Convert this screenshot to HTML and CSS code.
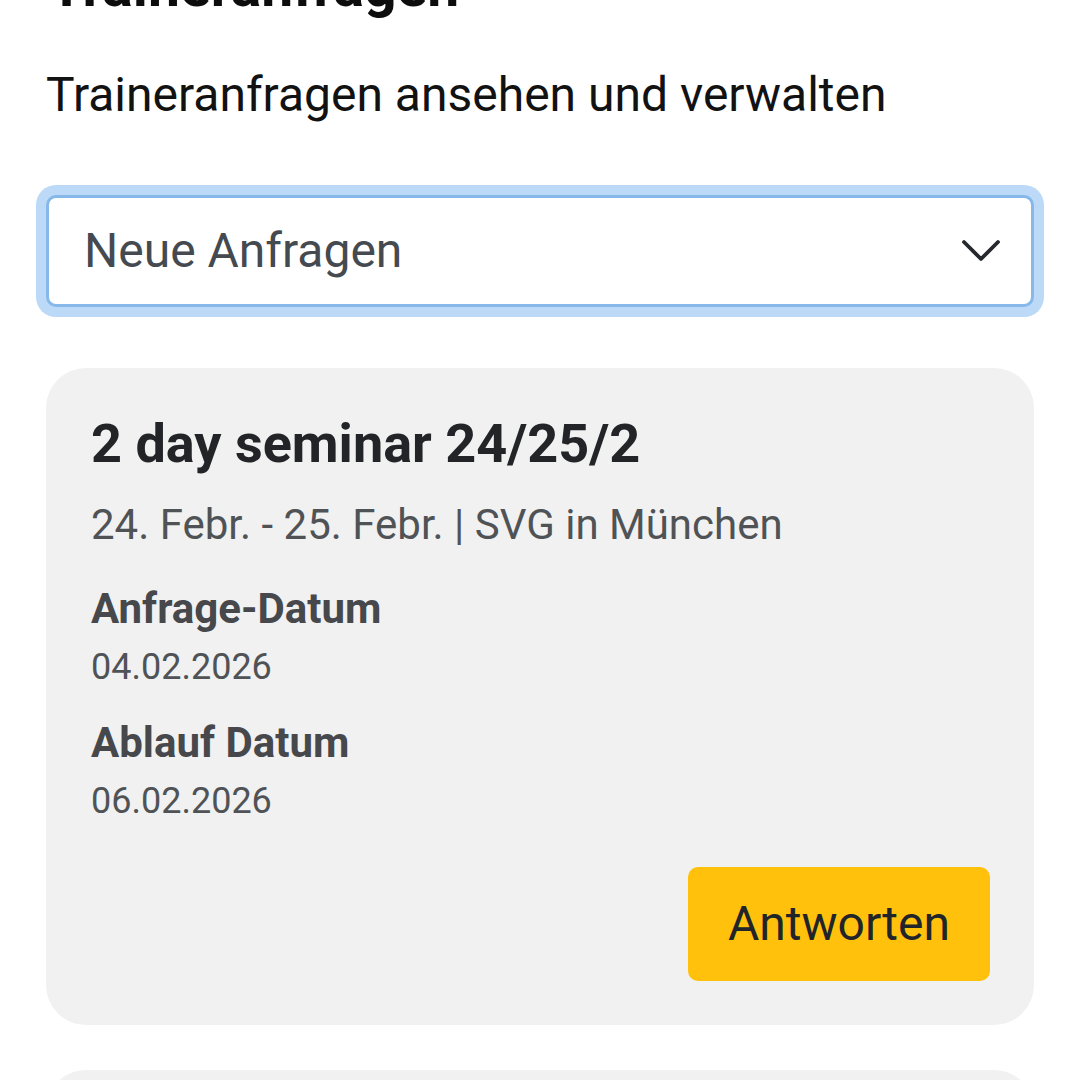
FILE: index.html
```html
<!DOCTYPE html>
<html lang="de">
<head>
<meta charset="utf-8">
<title>Traineranfragen</title>
<link rel="stylesheet" href="styles.css">
</head>
<body>
<div class="page">
  <h1 class="page-title">Traineranfragen</h1>
  <p class="subtitle">Traineranfragen ansehen und verwalten</p>
  <div class="select">
    <span class="select-value">Neue Anfragen</span>
    <svg class="chevron" width="40" height="24" viewBox="0 0 40 24" aria-hidden="true">
      <path d="M3 3 L20 20 L37 3" fill="none" stroke="#25292d" stroke-width="3.8" stroke-linecap="round" stroke-linejoin="round"/>
    </svg>
  </div>
  <div class="card">
    <h2 class="card-title">2 day seminar 24/25/2</h2>
    <p class="card-meta">24. Febr. - 25. Febr. | SVG in München</p>
    <div class="field first">
      <div class="field-label">Anfrage-Datum</div>
      <div class="field-value">04.02.2026</div>
    </div>
    <div class="field">
      <div class="field-label">Ablauf Datum</div>
      <div class="field-value">06.02.2026</div>
    </div>
    <div class="actions">
      <button class="btn-answer" type="button">Antworten</button>
    </div>
  </div>
  <div class="card card-next"></div>
</div>
</body>
</html>
```

FILE: styles.css
```css
html, body {
  margin: 0;
  padding: 0;
  background: #ffffff;
}
body {
  font-family: Roboto, "Noto Sans", "Liberation Sans", sans-serif;
  color: #111;
  overflow: hidden;
  height: 1080px;
}
.page {
  padding: 0 46px;
}
.page-title {
  margin: -47px 0 0 3px;
  font-size: 57px;
  font-weight: 700;
  line-height: 1.2;
  color: #0d0d0d;
}
.subtitle {
  margin: 38px 0 0 0;
  font-size: 48px;
  line-height: 1.5;
  color: #121212;
}
.select {
  margin-top: 64px;
  display: flex;
  align-items: center;
  justify-content: space-between;
  height: 112px;
  box-sizing: border-box;
  padding: 0 30px 0 35px;
  background: #fff;
  border: 3px solid #86b8ea;
  border-radius: 10px;
  box-shadow: 0 0 0 10px #bcdaf7;
}
.select-value {
  font-size: 48px;
  line-height: 1.5;
  color: #454a50;
}
.chevron {
  display: block;
  flex: none;
}
.card {
  margin-top: 61px;
  background: #f1f1f1;
  border-radius: 40px;
  padding: 44px 44px 44px 45px;
}
.card-next {
  margin-top: 45px;
  min-height: 200px;
}
.card-title {
  margin: 0;
  font-size: 54px;
  font-weight: 700;
  line-height: 1.2;
  color: #222427;
}
.card-meta {
  margin: 16px 0 0 0;
  font-size: 42px;
  line-height: 1.5;
  color: #505356;
}
.field {
  margin-top: 17px;
}
.field.first {
  margin-top: 21px;
}
.field-label {
  font-size: 42px;
  font-weight: 700;
  line-height: 1.5;
  color: #46484b;
}
.field-value {
  font-size: 36px;
  line-height: 1.5;
  color: #505356;
}
.actions {
  display: flex;
  justify-content: flex-end;
  margin-top: 39px;
}
.btn-answer {
  font-family: inherit;
  font-size: 48px;
  line-height: 1.5;
  color: #212529;
  background: #ffc10b;
  border: 3px solid #ffc10b;
  border-radius: 10px;
  padding: 18px 37px;
  cursor: pointer;
}
```
